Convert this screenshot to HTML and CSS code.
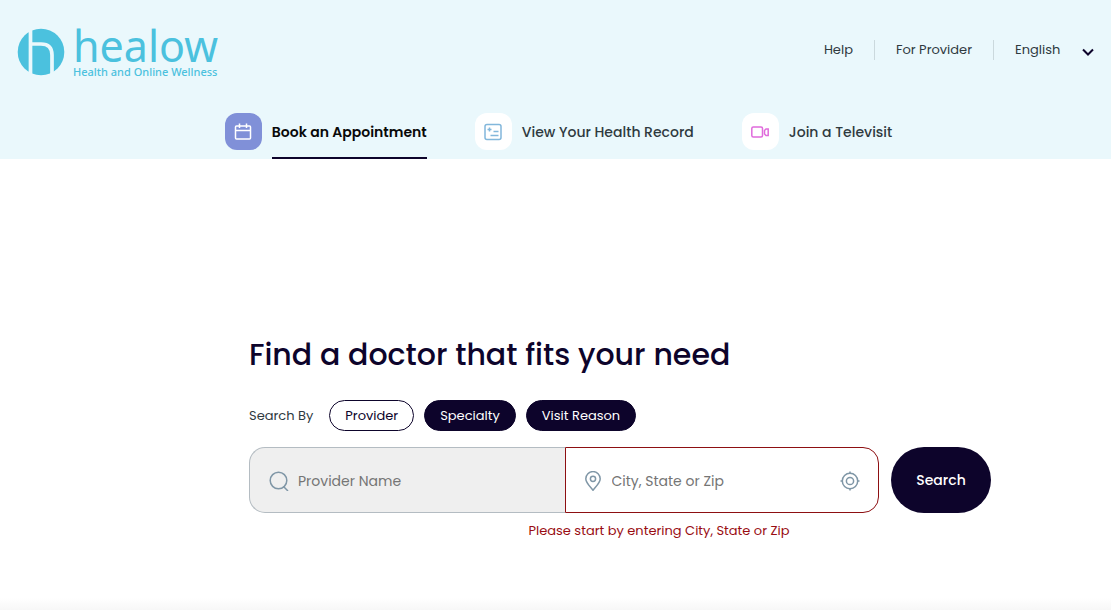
FILE: index.html
```html
<!DOCTYPE html>
<html lang="en">
<head>
    <meta charset="UTF-8">
    <meta name="viewport" content="width=device-width, initial-scale=1.0">
    <title>healow - Health and Online Wellness</title>
    <link rel="stylesheet" href="styles.css">
</head>
<body>
    <header class="header">
        <div class="top-bar">
            <a href="#" class="logo">
                <svg class="logo-mark" viewBox="0 0 48 48" aria-hidden="true">
                    <circle cx="24" cy="24" r="23.300" fill="#4bc1de"/>
                    <path d="M13.500 0V48M35 48V27Q35 16 24 16H15" fill="none" stroke="#eaf8fc" stroke-width="3.700"/>
                </svg>
                <span class="logo-text">
                    <span class="logo-name">healow</span>
                    <span class="logo-tagline">Health and Online Wellness</span>
                </span>
            </a>
            <nav class="top-links">
                <a href="#">Help</a>
                <a href="#">For Provider</a>
                <div class="language">
                    <select aria-label="Language">
                        <option>English</option>
                    </select>
                    <svg viewBox="0 0 12 8" aria-hidden="true">
                        <path d="M1 1.500L6 6.500L11 1.500"/>
                    </svg>
                </div>
            </nav>
        </div>

        <nav class="tabs">
            <a href="#" class="tab active">
                <span class="tab-icon calendar">
                    <svg viewBox="0 0 18 18" aria-hidden="true">
                        <rect x="1.500" y="3" width="15" height="13" rx="1"/>
                        <path d="M1.500 7.500H16.500M5.500 .5V5M12.500 .5V5"/>
                    </svg>
                </span>
                <span class="tab-label">Book an Appointment</span>
            </a>
            <a href="#" class="tab">
                <span class="tab-icon record">
                    <svg viewBox="0 0 18 18" aria-hidden="true">
                        <rect x="1" y="1.500" width="16" height="15" rx="2"/>
                        <path d="M5.500 4.500V8.500M3.500 6.500H7.500M9.500 8.500H14.500M6.500 12.500H14.500"/>
                    </svg>
                </span>
                <span class="tab-label">View Your Health Record</span>
            </a>
            <a href="#" class="tab">
                <span class="tab-icon video">
                    <svg viewBox="0 0 18 18" aria-hidden="true">
                        <rect x=".8" y="4" width="10.700" height="10" rx="1.500"/>
                        <path d="M13.500 7.500L15 6H17.200V12.500H15L13.500 11Z"/>
                    </svg>
                </span>
                <span class="tab-label">Join a Televisit</span>
            </a>
        </nav>
    </header>

    <main class="finder">
        <h1>Find a doctor that fits your need</h1>

        <div class="search-by">
            <span>Search By</span>
            <button type="button" class="pill selected">Provider</button>
            <button type="button" class="pill">Specialty</button>
            <button type="button" class="pill">Visit Reason</button>
        </div>

        <form class="search-form">
            <div class="fields">
                <label class="field provider-field">
                    <svg viewBox="0 0 20 20" aria-hidden="true">
                        <circle cx="9.500" cy="9.500" r="8.300"/>
                        <path d="M14.500 15.500L19 20"/>
                    </svg>
                    <input type="text" placeholder="Provider Name" aria-label="Provider Name">
                </label>
                <label class="field location-field">
                    <svg viewBox="0 0 20 20" aria-hidden="true">
                        <path d="M10 19.200C7.500 16 2.800 12 2.800 7.800A7.200 7.200 0 0 1 17.200 7.800C17.200 12 12.500 16 10 19.200Z"/>
                        <circle cx="10" cy="7.800" r="2.600"/>
                    </svg>
                    <input type="text" placeholder="City, State or Zip" aria-label="City, State or Zip">
                    <button type="button" class="locate" aria-label="Use my location">
                        <svg viewBox="0 0 20 20" aria-hidden="true">
                            <circle cx="10" cy="10" r="7.700"/>
                            <circle cx="10" cy="10" r="3.600"/>
                            <path d="M10 .5V3M10 17V19.500M.5 10H3M17 10H19.500"/>
                        </svg>
                    </button>
                </label>
            </div>
            <button type="submit" class="search-btn">Search</button>
        </form>
        <p class="error">Please start by entering City, State or Zip</p>
    </main>
</body>
</html>
```
FILE: styles.css
```css
* {
    margin: 0;
    padding: 0;
    box-sizing: border-box;
}

body {
    min-height: 100vh;
    background: linear-gradient(to top, #f7f7f7 0, #ffffff 12px);
    color: #2f3a3f;
    font-family: 'Poppins', 'Inter', sans-serif;
    font-size: 13px;
}

a {
    color: inherit;
    text-decoration: none;
}

button,
input,
select {
    font: inherit;
}

svg {
    display: block;
    flex: none;
}

.header {
    background: #eaf8fc;
}

.top-bar {
    display: flex;
    justify-content: space-between;
    height: 113px;
    padding: 28px 17px 0 17px;
}

.logo {
    display: flex;
    align-items: flex-start;
    gap: 8px;
    color: #4bc1de;
}

.logo-mark {
    width: 48px;
    height: 48px;
}

.logo-text {
    display: flex;
    flex-direction: column;
}

.logo-name {
    height: 38px;
    font-family: 'Noto Sans', sans-serif;
    font-size: 43px;
    line-height: 36px;
}

.logo-tagline {
    font-family: 'Noto Sans', sans-serif;
    font-size: 11px;
    font-weight: 500;
    line-height: 12px;
}

.top-links {
    display: flex;
    align-items: center;
    height: 44px;
}

.top-links > a {
    height: 20px;
    padding-right: 21px;
    margin-right: 21px;
    border-right: 1px solid #cbd9dd;
    line-height: 20px;
}

.language {
    position: relative;
}

.language select {
    width: 79px;
    border: none;
    background: none;
    appearance: none;
    color: inherit;
    line-height: 20px;
}

.language svg {
    position: absolute;
    top: 8px;
    right: 0;
    width: 12px;
    height: 8px;
    fill: none;
    stroke: #0d042b;
    stroke-width: 2;
    pointer-events: none;
}

.tabs {
    display: flex;
    justify-content: center;
    gap: 48px;
    padding-left: 6px;
}

.tab {
    display: flex;
    gap: 10px;
    font-size: 14px;
    font-weight: 500;
}

.tab-icon {
    display: flex;
    align-items: center;
    justify-content: center;
    width: 37px;
    height: 37px;
    border-radius: 12px;
    background: #ffffff;
}

.tab-icon svg {
    width: 18px;
    height: 18px;
    fill: none;
    stroke-width: 1.5;
}

.calendar {
    background: #8090d8;
    stroke: #ffffff;
}

.record {
    stroke: #82b7db;
}

.video {
    stroke: #e06bdc;
}

.tab-label {
    height: 46px;
    border-bottom: 2px solid transparent;
    line-height: 38px;
}

.active .tab-label {
    border-color: #0d042b;
    color: #090909;
    font-weight: 600;
}

.finder {
    padding: 176px 120px 60px 249px;
}

h1 {
    color: #0d042b;
    font-size: 30px;
    font-weight: 500;
    line-height: 40px;
}

.search-by {
    display: flex;
    align-items: center;
    gap: 10px;
    margin: 25px 0 16px;
}

.search-by span {
    margin-right: 6px;
}

.pill {
    height: 31px;
    padding: 0 15px;
    border: 1px solid #0d042b;
    border-radius: 16px;
    background: #0d042b;
    color: #ffffff;
    cursor: pointer;
}

.pill.selected {
    background: #ffffff;
    color: #0d042b;
}

.search-form {
    display: flex;
    gap: 12px;
}

.fields {
    display: flex;
    flex: 1;
    min-width: 0;
}

.field {
    display: flex;
    align-items: center;
    flex: 1 1 0;
    gap: 9px;
    min-width: 0;
    height: 66px;
    padding: 2px 18px 0 19px;
    border: 1px solid #b4bcc2;
}

.field svg {
    width: 20px;
    height: 20px;
    fill: none;
    stroke: #7f96a6;
    stroke-width: 1.5;
}

.field input {
    flex: 1;
    min-width: 0;
    border: none;
    outline: none;
    background: none;
    font-size: 14px;
}

.field input::placeholder {
    color: #757575;
}

.provider-field {
    border-right: none;
    border-radius: 16px 0 0 16px;
    background: #efefef;
}

.location-field {
    border-color: #8d0f12;
    border-radius: 0 16px 16px 0;
    padding-left: 17px;
}

.locate {
    border: none;
    background: none;
    cursor: pointer;
}

.search-btn {
    flex: none;
    width: 100px;
    height: 66px;
    border: none;
    border-radius: 33px;
    background: #0d042b;
    color: #ffffff;
    font-size: 14px;
    font-weight: 500;
    cursor: pointer;
}

.error {
    margin-top: 8px;
    padding-left: 78px;
    color: #990d13;
    line-height: 20px;
    text-align: center;
}
```
